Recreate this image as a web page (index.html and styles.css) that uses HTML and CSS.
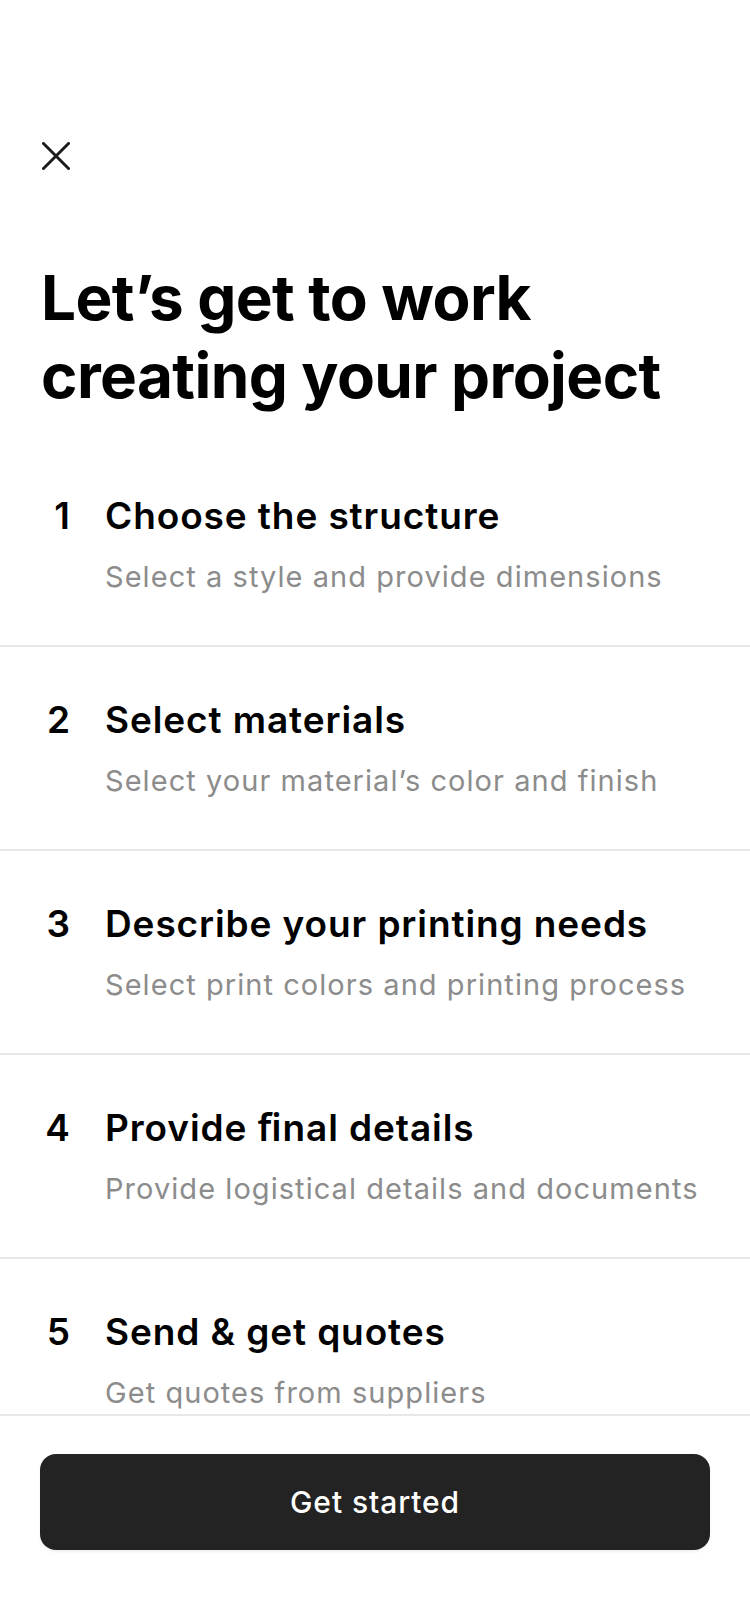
FILE: index.html
```html
<!DOCTYPE html>
<html lang="en">
<head>
<meta charset="utf-8">
<title>Create project</title>
<link rel="stylesheet" href="styles.css">
</head>
<body>
<div class="screen">
  <main class="content">
    <div class="top">
      <button class="close" aria-label="Close">
        <svg width="28" height="28" viewBox="0 0 28 28"><path d="M1.5 1.5 L26.5 26.5 M26.5 1.5 L1.5 26.5" stroke="#1c1c1c" stroke-width="3" stroke-linecap="round" fill="none"/></svg>
      </button>
    </div>
    <h1 class="heading">Let’s get to work<br>creating your project</h1>
    <ol class="steps">
      <li class="step">
        <span class="num">1</span>
        <div class="text">
          <div class="title">Choose the structure</div>
          <div class="sub">Select a style and provide dimensions</div>
        </div>
      </li>
      <li class="step">
        <span class="num">2</span>
        <div class="text">
          <div class="title">Select materials</div>
          <div class="sub">Select your material’s color and finish</div>
        </div>
      </li>
      <li class="step">
        <span class="num">3</span>
        <div class="text">
          <div class="title">Describe your printing needs</div>
          <div class="sub">Select print colors and printing process</div>
        </div>
      </li>
      <li class="step">
        <span class="num">4</span>
        <div class="text">
          <div class="title">Provide ﬁnal details</div>
          <div class="sub">Provide logistical details and documents</div>
        </div>
      </li>
      <li class="step">
        <span class="num">5</span>
        <div class="text">
          <div class="title">Send &amp; get quotes</div>
          <div class="sub">Get quotes from suppliers</div>
        </div>
      </li>
    </ol>
  </main>
  <footer class="footer">
    <button class="cta">Get started</button>
  </footer>
</div>
</body>
</html>
```

FILE: styles.css
```css
* { box-sizing: border-box; }
html, body { margin: 0; padding: 0; background: #fff; }
body { font-family: Inter, "Noto Sans", sans-serif; color: #000; }

.screen {
  width: 750px;
  height: 1624px;
  display: flex;
  flex-direction: column;
}

.content {
  flex: 1;
  overflow: hidden;
  min-height: 0;
}

.top {
  padding: 142px 0 0 42px;
}

.close {
  display: block;
  width: 28px;
  height: 28px;
  padding: 0;
  border: 0;
  background: none;
}
.close svg { display: block; }

.heading {
  margin: 89px 0 0 41px;
  font-size: 62px;
  line-height: 78px;
  font-weight: 700;
  letter-spacing: -0.6px;
}

.steps {
  list-style: none;
  margin: 28px 0 0;
  padding: 0;
}

.step {
  display: flex;
  align-items: flex-start;
  padding: 49px 0 48px 41px;
  border-bottom: 2px solid #e8e8e8;
}

.num {
  width: 29px;
  text-align: right;
  font-size: 37px;
  line-height: 48px;
  font-weight: 600;
  flex-shrink: 0;
}

.text { margin-left: 35px; }

.title {
  font-size: 37px;
  line-height: 48px;
  font-weight: 600;
  letter-spacing: 0.9px;
}

.sub {
  margin-top: 17px;
  font-size: 29px;
  line-height: 40px;
  color: #8c8c8c;
  letter-spacing: 1.05px;
}

.footer {
  border-top: 2px solid #e8e8e8;
  padding: 38px 40px 74px;
  flex-shrink: 0;
}

.cta {
  display: block;
  width: 100%;
  height: 96px;
  border: 0;
  border-radius: 16px;
  background: #232323;
  color: #fff;
  font-family: Inter, "Noto Sans", sans-serif;
  font-size: 30px;
  font-weight: 500;
  letter-spacing: 0.9px;
  box-shadow: 0 2px 3px rgba(0,0,0,0.06);
}
```
